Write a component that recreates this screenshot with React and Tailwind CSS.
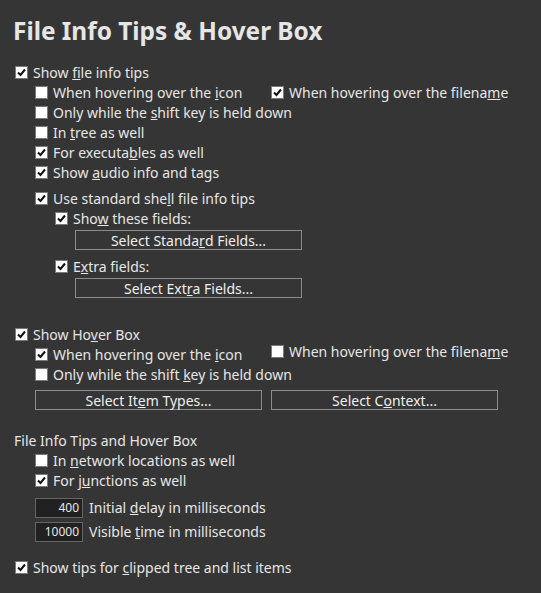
const font = { fontFamily: '"Noto Sans", "Open Sans", sans-serif' }

function Check({ checked }) {
  return (
    <span className="w-[13px] h-[13px] shrink-0 border border-[#7a7a7a] bg-white flex items-center justify-center">
      {checked && (
        <svg width="9" height="9" viewBox="0 0 9 9">
          <path d="M1 4.5 L3.5 7 L8 1.5" fill="none" stroke="#111" strokeWidth="2" />
        </svg>
      )}
    </span>
  )
}

function Box({ checked, children, className = '' }) {
  return (
    <div className={`flex items-center h-5 gap-[5px] ${className}`}>
      <Check checked={checked} />
      <span className="whitespace-nowrap">{children}</span>
    </div>
  )
}

function Btn({ children, className = '' }) {
  return (
    <div className={`h-5 border border-[#8c8c8c] flex items-center justify-center text-[#eee] ${className}`}>
      {children}
    </div>
  )
}

function Num({ value, label }) {
  return (
    <div className="flex items-center gap-[6px]">
      <div className="w-[48px] h-5 bg-[#212121] border border-[#666] text-[12px] text-right pr-[3px] leading-[18px]">
        {value}
      </div>
      <span>{label}</span>
    </div>
  )
}

export default function App() {
  return (
    <div
      className="w-[541px] h-[593px] overflow-hidden bg-[#353535] text-[#e6e6e6] text-[14px] pl-[15px] pt-[16px]"
      style={font}
    >
      <h1 className="text-[24.4px] font-bold leading-[30px] -ml-[2px] text-[#e6e6e6]">File Info Tips &amp; Hover Box</h1>

      <div className="mt-[16px]">
        <Box checked>Show <u>f</u>ile info tips</Box>
        <div className="pl-5">
          <div className="flex">
            <Box className="w-[236px]">When hovering over the <u>i</u>con</Box>
            <Box checked>When hovering over the filena<u>m</u>e</Box>
          </div>
          <Box>Only while the <u>s</u>hift key is held down</Box>
          <Box>In <u>t</u>ree as well</Box>
          <Box checked>For executa<u>b</u>les as well</Box>
          <Box checked>Show <u>a</u>udio info and tags</Box>
          <Box checked className="mt-[6px]">Use standard she<u>l</u>l file info tips</Box>
          <div className="pl-5">
            <Box checked>Sho<u>w</u> these fields:</Box>
            <Btn className="ml-5 w-[227px] mt-[2px]">Select Standa<u>r</u>d Fields...</Btn>
            <Box checked className="mt-[6px]">E<u>x</u>tra fields:</Box>
            <Btn className="ml-5 w-[227px] mt-[2px]">Select Ext<u>r</u>a Fields...</Btn>
          </div>
        </div>
      </div>

      <div className="mt-[26px]">
        <Box checked>Show Ho<u>v</u>er Box</Box>
        <div className="pl-5">
          <div className="flex">
            <Box checked className="w-[236px]">When hovering over the <u>i</u>con</Box>
            <Box className="-mt-[3px]">When hovering over the filena<u>m</u>e</Box>
          </div>
          <Box>Only while the shift <u>k</u>ey is held down</Box>
          <div className="flex gap-[9px] mt-[6px]">
            <Btn className="w-[227px]">Select It<u>e</u>m Types...</Btn>
            <Btn className="w-[227px]">Select C<u>o</u>ntext...</Btn>
          </div>
        </div>
      </div>

      <div className="mt-[20px]">
        <div className="h-5 flex items-center -ml-[1px]">File Info Tips and Hover Box</div>
        <div className="pl-5">
          <Box>In <u>n</u>etwork locations as well</Box>
          <Box checked>For j<u>u</u>nctions as well</Box>
          <div className="mt-[7px] flex flex-col gap-[3px]">
            <Num value="400" label={<>Initial <u>d</u>elay in milliseconds</>} />
            <Num value="10000" label={<>Visible <u>t</u>ime in milliseconds</>} />
          </div>
        </div>
      </div>

      <Box checked className="mt-[15px]">Show tips for <u>c</u>lipped tree and list items</Box>
    </div>
  )
}
